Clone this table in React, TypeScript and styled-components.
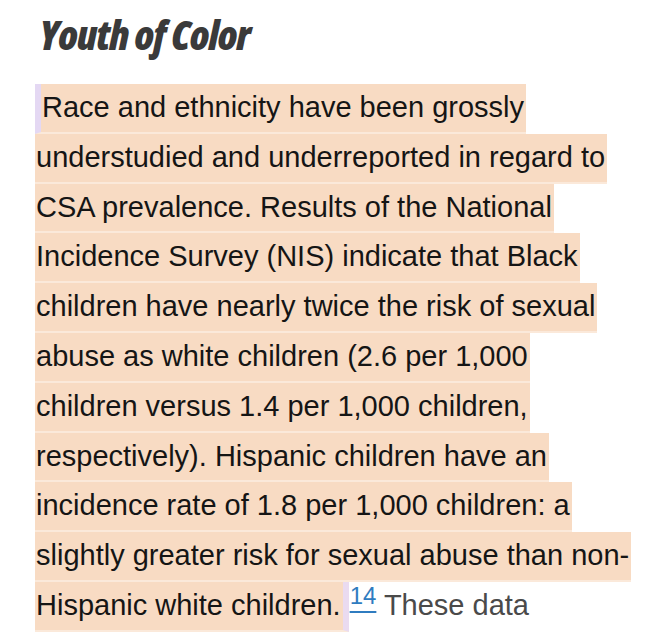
import React from "react";
import styled, { createGlobalStyle } from "styled-components";

const Global = createGlobalStyle`
  html, body { margin: 0; padding: 0; background: #ffffff; }
  body { overflow: hidden; }
`;

const Page = styled.div`
  width: 668px;
  height: 644px;
  overflow: hidden;
  padding-left: 35px;
  box-sizing: border-box;
  font-family: "Liberation Sans", Arial, sans-serif;
`;

const Heading = styled.h2`
  margin: 0;
  padding: 9px 0 0 4px;
  height: 72px;
  box-sizing: border-box;
  font-family: "Open Sans", sans-serif;
  font-weight: 800;
  font-style: italic;
  font-stretch: 78%;
  font-size: 41px;
  line-height: 50px;
  letter-spacing: -0.9px;
  color: #3a3a3a;
`;

const Body = styled.div`
  display: flex;
  flex-direction: column;
  padding-top: 12px;
`;

const Row = styled.div<{ $tail?: boolean }>`
  height: 49.8px;
  margin-top: ${(p) => (p.$tail ? "3px" : "0")};
  white-space: nowrap;
  font-size: 29px;
  line-height: 47.8px;
  color: #151515;
`;

const Mark = styled.span<{ $caretLeft?: boolean; $caretRight?: boolean }>`
  display: inline-block;
  height: 47.8px;
  background: #f8dbc3;
  border-bottom: 2px solid #fbe9da;
  padding-left: 1px;
  padding-right: 2px;
  border-left: ${(p) => (p.$caretLeft ? "6px solid #e4d8f3" : "0")};
  border-right: ${(p) => (p.$caretRight ? "6px solid #eadbf0" : "0")};
`;

const Ref = styled.a`
  font-size: 24px;
  position: relative;
  top: -11px;
  color: #2f7cc0;
  text-decoration: underline;
  text-underline-offset: 7px;
  text-decoration-thickness: 2px;
  margin-left: 1px;
`;

const Plain = styled.span<{ $faint?: boolean }>`
  color: ${(p) => (p.$faint ? "#8a8a8a" : "#4a4a4a")};
`;

const lines = [
  "Race and ethnicity have been grossly",
  "understudied and underreported in regard to",
  "CSA prevalence. Results of the National",
  "Incidence Survey (NIS) indicate that Black",
  "children have nearly twice the risk of sexual",
  "abuse as white children (2.6 per 1,000",
  "children versus 1.4 per 1,000 children,",
  "respectively). Hispanic children have an",
  "incidence rate of 1.8 per 1,000 children: a",
  "slightly greater risk for sexual abuse than non-",
];

export default function App() {
  return (
    <>
      <Global />
      <Page>
        <Heading>Youth of Color</Heading>
        <Body>
          {lines.map((l, i) => (
            <Row key={i}>
              <Mark $caretLeft={i === 0}>{l}</Mark>
            </Row>
          ))}
          <Row>
            <Mark $caretRight>Hispanic white children.</Mark>
            <Ref href="#14">14</Ref>
            <Plain> These data</Plain>
          </Row>
          <Row $tail>
            <Plain $faint>are limited, as the data collected do not</Plain>
          </Row>
        </Body>
      </Page>
    </>
  );
}
